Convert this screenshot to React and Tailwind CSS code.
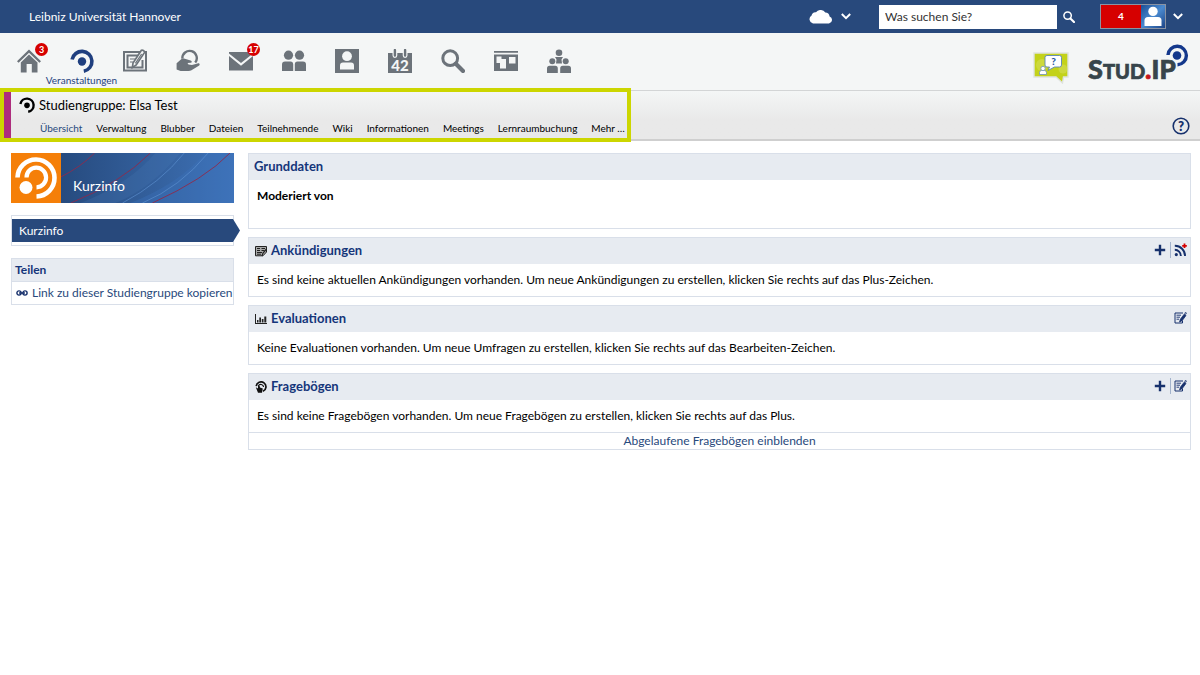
import React from 'react'

const mainNav = [
  { name: 'Start', icon: HomeIcon, badge: '3' },
  { name: 'Veranstaltungen', icon: SeminarIcon, active: true },
  { name: 'Arbeitsplatz', icon: WorkplaceIcon },
  { name: 'OER', icon: ServiceIcon },
  { name: 'Nachrichten', icon: MailIcon, badge: '17' },
  { name: 'Community', icon: CommunityIcon },
  { name: 'Profil', icon: ProfileIcon },
  { name: 'Planer', icon: PlannerIcon },
  { name: 'Suche', icon: SearchIcon },
  { name: 'Schwarzes Brett', icon: BoardIcon },
  { name: 'Gruppen', icon: GroupsIcon },
]

const tabs = [
  'Übersicht', 'Verwaltung', 'Blubber', 'Dateien', 'Teilnehmende',
  'Wiki', 'Informationen', 'Meetings', 'Lernraumbuchung', 'Mehr …',
]

function HomeIcon() {
  return (
    <svg width="24" height="24" viewBox="0 0 24 24" fill="currentColor" aria-hidden="true">
      <path d="M12 0.5 24 12.2 22.4 13.8 12 3.8 1.6 13.8 0 12.2Z" />
      <path d="M12 5.6 20.5 13.6V23.5H14.8V15H9.6V23.5H3.8V13.6Z" />
    </svg>
  )
}

function SeminarIcon({ size = 24 }) {
  return (
    <svg width={size} height={size} viewBox="0 0 24 24" aria-hidden="true">
      <circle cx="12" cy="12.5" r="4.2" fill="currentColor" />
      <path d="M2.1 10.5A10 10 0 1 1 13.8 22.2" fill="none" stroke="currentColor" strokeWidth="3.6" />
    </svg>
  )
}

function WorkplaceIcon() {
  return (
    <svg width="24" height="24" viewBox="0 0 24 24" fill="none" stroke="currentColor" aria-hidden="true">
      <rect x="1" y="3" width="22" height="18.5" strokeWidth="2" />
      <path d="M15 6.5H4.5V18.5H19.5V11" strokeWidth="2" />
      <path d="M7 10H12M7 13H10" strokeWidth="1.2" />
      <path d="M18.4 1.2 10 14 9.4 18.6 13.2 16 21.6 3.4C21.3 1.8 19.8 0.8 18.4 1.2Z" fill="#f4f6f6" strokeWidth="1.7" />
      <path d="M18.6 5 12.4 14.4" strokeWidth="1.2" />
    </svg>
  )
}

function ServiceIcon() {
  return (
    <svg width="24" height="24" viewBox="0 0 24 24" aria-hidden="true">
      <path d="M6.4 9.6A7.2 7.2 0 1 1 19.2 13.6" fill="none" stroke="currentColor" strokeWidth="2.4" />
      <path d="M0.6 14.2 5.2 10.2C6 9.4 7 9.3 8 9.6L14.6 11.4C16.3 12 16 13.6 14.4 13.8L11.5 14 12.5 15.4 16 16 21.6 14.4C23.6 14 24.4 15.8 22.8 16.8L15.5 21.2C14.6 21.8 13.6 22 12.5 22H4.6L0.6 20.6Z" fill="currentColor" />
    </svg>
  )
}

function MailIcon() {
  return (
    <svg width="24" height="24" viewBox="0 0 24 24" fill="currentColor" aria-hidden="true">
      <path d="M0 3H24V4.4L12 14 0 4.4Z" />
      <path d="M0 7 12 16.8 24 7V21.5H0Z" />
    </svg>
  )
}

function CommunityIcon() {
  return (
    <svg width="24" height="24" viewBox="0 0 24 24" fill="currentColor" aria-hidden="true">
      <circle cx="6.5" cy="6.2" r="4.6" />
      <circle cx="17.5" cy="6.2" r="4.6" />
      <path d="M0 22V15.5Q0 12.5 3 12.5H8.5Q11.2 12.5 11.2 15.5V22Z" />
      <path d="M12.8 22V15.5Q12.8 12.5 15.5 12.5H21Q24 12.5 24 15.5V22Z" />
    </svg>
  )
}

function ProfileIcon() {
  return (
    <svg width="24" height="24" viewBox="0 0 24 24" aria-hidden="true">
      <rect width="24" height="24" fill="currentColor" />
      <circle cx="12" cy="7.2" r="4.9" fill="#f4f6f6" />
      <path d="M5 20.5V16.5Q5 13.5 8 13.5H16Q19 13.5 19 16.5V20.5Z" fill="#f4f6f6" />
    </svg>
  )
}

function PlannerIcon() {
  return (
    <svg width="24" height="24" viewBox="0 0 24 24" aria-hidden="true">
      <path d="M0 4H4.5V6.5A2.4 2.4 0 0 0 9.3 6.5V4H14.7V6.5A2.4 2.4 0 0 0 19.5 6.5V4H24V24H0Z" fill="currentColor" />
      <path d="M6.9 1V6.5M17.1 1V6.5" stroke="currentColor" strokeWidth="2.4" strokeLinecap="round" />
      <text x="12" y="21.5" textAnchor="middle" fontSize="15" fontWeight="900" fill="#f4f6f6">42</text>
    </svg>
  )
}

function SearchIcon({ size = 24 }) {
  return (
    <svg width={size} height={size} viewBox="0 0 24 24" fill="none" stroke="currentColor" aria-hidden="true">
      <circle cx="9.2" cy="9.2" r="7.4" strokeWidth="3" />
      <path d="M14.8 14.8 22 22" strokeWidth="4.2" strokeLinecap="round" />
    </svg>
  )
}

function BoardIcon() {
  return (
    <svg width="24" height="24" viewBox="0 0 24 24" aria-hidden="true">
      <path d="M0 2H24V3.8H0ZM0 5.5H24V22H0Z" fill="currentColor" />
      <path d="M2.5 7.5H7.5V10H12V19.5H6V14H2.5ZM15 8H21.5V14.5H15Z" fill="#f4f6f6" />
    </svg>
  )
}

function GroupsIcon() {
  return (
    <svg width="24" height="24" viewBox="0 0 24 24" fill="currentColor" aria-hidden="true">
      <circle cx="12" cy="3.8" r="3.3" />
      <path d="M8 8H16L14.5 10.5 15 14.5H9L9.5 10.5Z" />
      <circle cx="5.3" cy="12.2" r="3" />
      <circle cx="18.7" cy="12.2" r="3" />
      <path d="M0 24V19.5Q0 16.8 2.6 16.8H8.2Q10.8 16.8 10.8 19.5V24ZM13.2 24V19.5Q13.2 16.8 15.8 16.8H21.4Q24 16.8 24 19.5V24Z" />
    </svg>
  )
}

function ChevronIcon() {
  return (
    <svg width="10" height="7" viewBox="0 0 10 7" fill="none" stroke="#fff" strokeWidth="2" aria-hidden="true">
      <path d="M0.8 1 5 5.2 9.2 1" />
    </svg>
  )
}

function CloudIcon() {
  return (
    <svg width="25" height="14" viewBox="0 0 25 14" fill="#fff" aria-hidden="true">
      <path d="M5 13.5A4.3 4.3 0 0 1 3.6 5.6 3.6 3.6 0 0 1 8 2.3 5.6 5.6 0 0 1 17.3 2.6 4.4 4.4 0 0 1 21.6 6.4 3.7 3.7 0 0 1 21 13.5Z" />
    </svg>
  )
}

function AvatarIcon() {
  return (
    <svg width="24" height="23" viewBox="0 0 24 23" aria-hidden="true">
      <defs>
        <linearGradient id="avatar" x1="0" y1="0" x2="1" y2="1">
          <stop offset="0" stopColor="#1d4f96" />
          <stop offset="0.5" stopColor="#4a8ad0" />
          <stop offset="1" stopColor="#1d4486" />
        </linearGradient>
      </defs>
      <rect width="24" height="23" fill="url(#avatar)" />
      <circle cx="12" cy="6.4" r="4.7" fill="#fff" />
      <path d="M3.5 21V15.5Q3.5 12 7 12H17Q20.5 12 20.5 15.5V21Z" fill="#fff" />
    </svg>
  )
}

function SupportIcon() {
  return (
    <svg width="36" height="32" viewBox="0 0 36 32" aria-hidden="true">
      <path d="M1 1H35V25H30.5L29.5 31 23 25H1Z" fill="#c3d21a" stroke="#dfe3e0" strokeWidth="1.4" />
      <circle cx="9" cy="13" r="6" fill="#d3de55" opacity="0.6" />
      <circle cx="30" cy="17" r="4.5" fill="#d3de55" opacity="0.6" />
      <path d="M14 3.5H26.5Q28.5 3.5 28.5 5.5V13Q28.5 15 26.5 15H21.5L15 18.5 16.5 15H14Q12 15 12 13V5.5Q12 3.5 14 3.5Z" fill="#fff" stroke="#5b86b5" strokeWidth="0.9" />
      <text x="20.5" y="13" textAnchor="middle" fontSize="10" fontWeight="900" fill="#1f57a5">?</text>
      <path d="M6.5 22.5V20.5Q6.5 18.5 8.5 18.5H11.5Q13.5 18.5 13.5 20.5V22.5Z" fill="#fff" stroke="#6f92b8" strokeWidth="0.8" />
      <circle cx="10" cy="16.5" r="2.2" fill="#fff" stroke="#6f92b8" strokeWidth="0.8" />
    </svg>
  )
}

function StudIPLogo() {
  return (
    <svg width="102" height="44" viewBox="0 0 102 44" role="img" aria-label="Stud.IP">
      <text x="0" y="35" fontSize="27" fontWeight="900" fill="#37454b" stroke="#37454b" strokeWidth="0.7">
        S<tspan fontSize="20">TUD</tspan><tspan fill="#c4161c" stroke="#c4161c">.</tspan><tspan fontSize="26">IP</tspan>
      </text>
      <circle cx="89" cy="11.5" r="4.3" fill="#14388c" />
      <path d="M80 11A9.2 9.2 0 1 1 89.5 20.7" fill="none" stroke="#14388c" strokeWidth="3.4" />
    </svg>
  )
}

function HelpIcon() {
  return (
    <svg width="18" height="18" viewBox="0 0 18 18" aria-hidden="true">
      <circle cx="9" cy="9" r="7.8" fill="none" stroke="#16306c" strokeWidth="1.6" />
      <text x="9" y="13.5" textAnchor="middle" fontSize="13" fontWeight="800" fill="#16306c">?</text>
    </svg>
  )
}

function LinkIcon() {
  return (
    <svg className="shrink-0" width="12" height="6" viewBox="0 0 12 6" fill="none" stroke="#16306c" strokeWidth="1.4" aria-hidden="true">
      <circle cx="3" cy="3" r="2.1" />
      <circle cx="9" cy="3" r="2.1" />
      <path d="M3 3H9" />
    </svg>
  )
}

function NewsIcon() {
  return (
    <svg width="12" height="12" viewBox="0 0 12 12" fill="none" stroke="#222" aria-hidden="true">
      <path d="M0.5 1.5H11.5V7L8 10.8H0.5Z" fill="#aaa" />
      <path d="M2 3.5H5M6.5 3.5H10M2 5.5H5M6.5 5.5H9.5M2 7.5H7M2 9.2H6" />
      <path d="M7 11 8 8 11.5 4" strokeWidth="1.2" />
    </svg>
  )
}

function ChartIcon() {
  return (
    <svg width="12" height="12" viewBox="0 0 12 12" fill="#222" aria-hidden="true">
      <path d="M0 1H1V10H12V11H0ZM2 7H3.5V9.5H2ZM4.3 4.5H6V9.5H4.3ZM6.8 6H8.5V9.5H6.8ZM9.3 3.5H11.3V9.5H9.3Z" />
    </svg>
  )
}

function VoteIcon() {
  return (
    <svg width="12" height="12" viewBox="0 0 12 12" aria-hidden="true">
      <path d="M1.2 5.2A4.9 4.9 0 1 1 8 10.3" fill="none" stroke="#111" strokeWidth="1.7" />
      <path d="M3.3 5A2.8 2.8 0 0 1 8.6 6" fill="none" stroke="#111" strokeWidth="1.2" />
      <path d="M0.8 6.2 3 7.5V4.8H4.6L5 6.4 7.8 7.5 7 11.8H3Z" fill="#111" />
    </svg>
  )
}

function PlusIcon() {
  return (
    <svg width="12" height="12" viewBox="0 0 12 12" fill="none" stroke="#16306c" strokeWidth="2.4" aria-hidden="true">
      <path d="M6 0.8V11.2M0.8 6H11.2" />
    </svg>
  )
}

function RssIcon() {
  return (
    <svg width="13" height="14" viewBox="0 0 13 14" fill="none" stroke="#16306c" aria-hidden="true">
      <circle cx="2.3" cy="11.6" r="1.6" fill="#16306c" stroke="none" />
      <path d="M0.8 6.8A6 6 0 0 1 6.8 13M0.8 2.8A10 10 0 0 1 11 13" strokeWidth="1.9" />
      <path d="M10.5 0.5V5.1M8.2 2.8H12.8" stroke="#d60000" strokeWidth="1.8" />
    </svg>
  )
}

function EditIcon() {
  return (
    <svg width="13" height="12" viewBox="0 0 13 12" fill="none" stroke="#16306c" aria-hidden="true">
      <path d="M9 1H1V11H8.5V8.5" />
      <path d="M2.5 3.2H7M2.5 5.2H6M2.5 7.2H5" strokeWidth="0.9" />
      <path d="M10.2 2.2 6.4 7.2 5.6 10 8.2 8.6 12 3.4Z" fill="#16306c" strokeWidth="0.8" />
      <circle cx="11.6" cy="1.3" r="0.8" strokeWidth="0.8" />
    </svg>
  )
}

function Panel({ title, icon, actions = [], children }) {
  return (
    <section className="border border-[#d9dfe9] bg-white">
      <header className="flex h-[26px] items-center bg-[#e7ebf1] px-[5px]">
        {icon && <span className="ml-px mr-1">{icon}</span>}
        <h2 className="text-[13px] font-bold text-[#15357a]">{title}</h2>
        <div className="ml-auto flex items-center pb-[3px] -mr-[2px]">
          {actions.map((action, i) => (
            <button
              key={action.label}
              type="button"
              aria-label={action.label}
              className={i > 0 ? 'ml-1 flex h-4 items-center border-l border-[#a3b3cc] pl-[3px]' : 'flex items-center'}
            >
              {action.icon}
            </button>
          ))}
        </div>
      </header>
      {children}
    </section>
  )
}

function TopBar() {
  return (
    <div className="flex h-[33px] items-center bg-[#28497c] pr-[17px] pl-[29px] text-white">
      <span className="text-[12px]">Leibniz Universität Hannover</span>
      <div className="ml-auto flex items-center">
        <button type="button" aria-label="Cloud" className="flex items-center gap-2">
          <CloudIcon />
          <ChevronIcon />
        </button>
        <form className="ml-7 flex items-center" onSubmit={(e) => e.preventDefault()}>
          <input
            type="text"
            aria-label="Suche"
            placeholder="Was suchen Sie?"
            className="h-6 w-[178px] bg-white px-[6px] text-[12px] text-black placeholder:text-[#333]"
          />
          <button type="submit" aria-label="Suchen" className="ml-[6px]">
            <SearchIcon size={12} />
          </button>
        </form>
        <button type="button" aria-label="Benachrichtigungen" className="ml-[25px] flex h-[25px] items-center border border-[#8a93a3] bg-[#d60000]">
          <span className="w-10 text-center text-[10px] font-bold">4</span>
          <AvatarIcon />
        </button>
        <button type="button" aria-label="Profilmenü" className="ml-[7px]">
          <ChevronIcon />
        </button>
      </div>
    </div>
  )
}

function Header() {
  return (
    <header className="flex h-[57px] items-start bg-[#f4f6f6] pl-[2px]">
      <nav className="flex pt-4">
        {mainNav.map(({ name, icon: Icon, badge, active }) => (
          <a
            key={name}
            href="#"
            aria-label={name}
            className={`relative flex w-[53px] flex-col items-center ${active ? 'text-[#1f3f7f]' : 'text-[#6c737a]'}`}
          >
            <Icon />
            {active && <span className="text-[10px] leading-[14px]">{name}</span>}
            {badge && (
              <span className="absolute -top-[6px] left-[33px] flex size-[13px] items-center justify-center rounded-full bg-[#d60000] text-[9px] font-bold text-white">
                {badge}
              </span>
            )}
          </a>
        ))}
      </nav>
      <div className="ml-auto flex items-start gap-[19px] pt-[11px] pr-[10px]">
        <a href="#" aria-label="Support" className="pt-2"><SupportIcon /></a>
        <a href="#" aria-label="Startseite"><StudIPLogo /></a>
      </div>
    </header>
  )
}

function ContextBar() {
  return (
    <div className="flex h-[51px] items-stretch border-t border-b-2 border-t-[#d3d5d6] border-b-[#cfcfcf] bg-linear-to-b from-[#f4f6f6] to-[#e9e9e9] to-60%">
      <div className="relative flex pl-[3px]">
        <div className="w-2 bg-[#ad2d7d]" />
        <div className="flex flex-col justify-between pt-[6px] pr-[6px] pl-2">
          <div className="flex items-center gap-1">
            <SeminarIcon size={16} />
            <h1 className="text-[13px] leading-4">Studiengruppe: Elsa Test</h1>
          </div>
          <nav className="ml-[14px] flex">
            {tabs.map((tab, i) => (
              <a
                key={tab}
                href="#"
                className={
                  i === 0
                    ? 'border-b border-[#28497c] px-[7px] pb-[2px] text-[10px] leading-4 text-[#28497c]'
                    : 'px-[7px] pb-[3px] text-[10px] leading-4 last:pr-0'
                }
              >
                {tab}
              </a>
            ))}
          </nav>
        </div>
        {/* highlight frame around the course navigation */}
        <div className="pointer-events-none absolute -inset-y-[3px] inset-x-0 border-4 border-[#ccd600]" />
      </div>
      <button type="button" aria-label="Hilfe" className="mt-[26px] mr-[10px] ml-auto self-start">
        <HelpIcon />
      </button>
    </div>
  )
}

function Sidebar() {
  return (
    <aside className="w-[223px] shrink-0">
      <div className="relative flex h-[50px] overflow-hidden bg-linear-to-r from-[#20406f] to-[#3f73b8]">
        <svg className="absolute inset-0 size-full" viewBox="0 0 224 50" preserveAspectRatio="none" fill="none" aria-hidden="true">
          <path d="M120 50Q170 30 195 0H224V50Z" fill="#3c74bd" opacity="0.35" />
          <path d="M70 50Q120 30 145 0H170Q140 36 105 50Z" fill="#4677b5" opacity="0.25" />
          <path d="M112 50Q150 30 174 0M132 50Q170 34 198 0" stroke="#5f94d4" strokeWidth="0.6" />
          <path d="M50 24Q70 14 84 0M60 50Q110 30 140 0M142 50Q195 26 220 0" stroke="#8e2a4c" strokeWidth="0.9" />
        </svg>
        <svg className="relative shrink-0" width="50" height="50" viewBox="0 0 50 50" aria-hidden="true">
          <rect width="50" height="50" fill="#f57f08" />
          <circle cx="15" cy="34.5" r="6.5" fill="#fff" />
          <path d="M6.5 24.5A18.5 18.5 0 1 1 25.5 43.5" fill="none" stroke="#fff" strokeWidth="4.6" />
          <path d="M15.5 24.5A9.8 9.8 0 1 1 25.5 34.3" fill="none" stroke="#fff" strokeWidth="4.2" />
        </svg>
        <span className="relative self-end pb-[7px] pl-3 text-[14px] leading-5 text-white">Kurzinfo</span>
      </div>

      <nav className="mt-3 border border-[#d9dfe9] py-[3px]">
        <a href="#" className="relative flex h-[23px] items-center bg-[#28497c] pl-[7px] text-[12px] text-white">
          Kurzinfo
          <svg className="absolute top-0 left-full h-full" width="7" viewBox="0 0 7 23" preserveAspectRatio="none" fill="#28497c" aria-hidden="true">
            <path d="M0 0 7 11.5 0 23Z" />
          </svg>
        </a>
      </nav>

      <section className="mt-3 border border-[#d9dfe9]">
        <h2 className="border-b border-[#d9dfe9] bg-[#e7ebf1] px-[3px] text-[12px] leading-[22px] font-bold text-[#15357a]">Teilen</h2>
        <a href="#" className="flex items-center gap-1 px-1 text-[12px] leading-[22px] whitespace-nowrap text-[#28497c]">
          <LinkIcon />
          Link zu dieser Studiengruppe kopieren
        </a>
      </section>
    </aside>
  )
}

const App = () => {
  return (
    <div className="min-h-screen bg-white font-['Lato',sans-serif] text-[12px] text-black">
      <TopBar />
      <Header />
      <ContextBar />
      <div className="flex gap-[14px] pt-3 pr-[9px] pl-[11px]">
        <Sidebar />
        <main className="flex min-w-0 grow flex-col gap-2">
          <Panel title="Grunddaten">
            <p className="px-2 pt-2 pb-6 leading-4 font-bold">Moderiert von</p>
          </Panel>
          <Panel
            title="Ankündigungen"
            icon={<NewsIcon />}
            actions={[
              { label: 'Ankündigung hinzufügen', icon: <PlusIcon /> },
              { label: 'RSS-Feed verwalten', icon: <RssIcon /> },
            ]}
          >
            <p className="px-2 py-2 leading-4">
              Es sind keine aktuellen Ankündigungen vorhanden. Um neue Ankündigungen zu erstellen, klicken Sie rechts auf das Plus-Zeichen.
            </p>
          </Panel>
          <Panel
            title="Evaluationen"
            icon={<ChartIcon />}
            actions={[{ label: 'Evaluationen bearbeiten', icon: <EditIcon /> }]}
          >
            <p className="px-2 py-2 leading-4">
              Keine Evaluationen vorhanden. Um neue Umfragen zu erstellen, klicken Sie rechts auf das Bearbeiten-Zeichen.
            </p>
          </Panel>
          <Panel
            title="Fragebögen"
            icon={<VoteIcon />}
            actions={[
              { label: 'Fragebogen hinzufügen', icon: <PlusIcon /> },
              { label: 'Fragebögen bearbeiten', icon: <EditIcon /> },
            ]}
          >
            <p className="px-2 py-2 leading-4">
              Es sind keine Fragebögen vorhanden. Um neue Fragebögen zu erstellen, klicken Sie rechts auf das Plus.
            </p>
            <div className="border-t border-[#d9dfe9] text-center leading-4">
              <a href="#" className="text-[#28497c]">Abgelaufene Fragebögen einblenden</a>
            </div>
          </Panel>
        </main>
      </div>
    </div>
  )
}

export default App
